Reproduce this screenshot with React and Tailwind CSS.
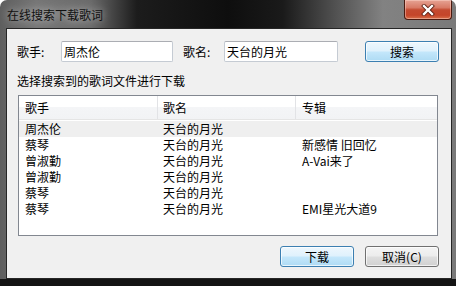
const rows = [
  ['周杰伦', '天台的月光', ''],
  ['蔡琴', '天台的月光', '新感情 旧回忆'],
  ['曾淑勤', '天台的月光', 'A-Vai来了'],
  ['曾淑勤', '天台的月光', ''],
  ['蔡琴', '天台的月光', ''],
  ['蔡琴', '天台的月光', 'EMI星光大道9'],
];

function WinButton({ children, primary }) {
  return (
    <button
      className={
        primary
          ? 'w-[74px] h-[21px] rounded-[3px] border border-[#3c7fb1] bg-[linear-gradient(180deg,#eef7fd_0%,#dff1fc_48%,#c4e7fb_52%,#aedbf4_100%)] shadow-[inset_0_0_0_1px_rgba(255,255,255,0.7)] text-black leading-none'
          : 'w-[74px] h-[21px] rounded-[3px] border border-[#707070] bg-[linear-gradient(180deg,#f4f4f4_0%,#ececec_48%,#dedede_52%,#d0d0d0_100%)] shadow-[inset_0_0_0_1px_rgba(255,255,255,0.7)] text-black leading-none'
      }
    >
      {children}
    </button>
  );
}

export default function App() {
  return (
    <div className="w-[456px] h-[286px] flex flex-col rounded-t-[7px] overflow-hidden bg-[linear-gradient(90deg,#5e5e5e_0%,#767676_8%,#6a6a6a_20%,#1c1c1c_30%,#0e0e0e_50%,#1a1a1a_62%,#4a4a4a_72%,#828282_84%,#7a7a7a_100%)] font-['Noto_Sans_CJK_SC','Noto_Sans',sans-serif] text-[12px] text-black">
      {/* Title bar */}
      <div className="h-[28px] flex items-start justify-between pl-[7px] pr-[4px] shrink-0">
        <span className="mt-[7px] leading-[16px] text-[#111] [text-shadow:0_0_8px_rgba(255,255,255,0.7)]">
          在线搜索下载歌词
        </span>
        <div className="w-[48px] h-[20px] rounded-b-[4px] border border-t-0 border-[#4a1a10] bg-[linear-gradient(180deg,#e6a394_0%,#d87a66_40%,#c44a30_52%,#c5452a_80%,#d8704a_100%)] shadow-[inset_0_0_0_1px_rgba(255,220,210,0.45)] flex items-center justify-center">
          <svg width="14" height="12" viewBox="0 0 14 12">
            <path d="M3 2 L11 10 M11 2 L3 10" stroke="#5a1c10" strokeWidth="4" strokeLinecap="square" />
            <path d="M3 2 L11 10 M11 2 L3 10" stroke="#ffffff" strokeWidth="2.4" strokeLinecap="square" />
          </svg>
        </div>
      </div>

      {/* Client */}
      <div className="flex-1 flex pl-[6px] pr-[4px] min-h-0">
        <div className="flex-1 border border-[#262626] bg-[#f0f0f0] flex flex-col pt-[12px] pl-[10px] pr-[12px]">
          <div className="flex items-center h-[21px]">
            <span className="w-[44px]">歌手:</span>
            <div className="w-[112px] h-[21px] border border-[#c5cbd3] border-t-[#abadb3] rounded-[2px] bg-white flex items-center pl-[2px]">
              周杰伦
            </div>
            <span className="ml-[10px] w-[41px]">歌名:</span>
            <div className="w-[114px] h-[21px] border border-[#c5cbd3] border-t-[#abadb3] rounded-[2px] bg-white flex items-center pl-[2px]">
              天台的月光
            </div>
            <div className="ml-auto">
              <WinButton primary>搜索</WinButton>
            </div>
          </div>

          <div className="mt-[11px] leading-[16px]">选择搜索到的歌词文件进行下载</div>

          <div className="mt-[6px] ml-[1px] w-[420px] h-[141px] border border-[#828790] bg-white flex flex-col">
            <div className="h-[24px] flex border-b border-[#e5e5e5] bg-[linear-gradient(180deg,#ffffff_0%,#ffffff_50%,#f4f5f7_50%,#f2f3f5_100%)]">
              <div className="w-[139px] border-r border-[#e2e3e6] pl-[6px] flex items-center">歌手</div>
              <div className="w-[138px] border-r border-[#e2e3e6] pl-[5px] flex items-center">歌名</div>
              <div className="flex-1 pl-[6px] flex items-center">专辑</div>
            </div>
            <div className="flex flex-col pt-[1px]">
              {rows.map((r, i) => (
                <div key={i} className={`h-[16px] flex items-center leading-[16px] ${i === 0 ? 'bg-[#efefef]' : ''}`}>
                  <div className="w-[139px] pl-[6px]">{r[0]}</div>
                  <div className="w-[138px] pl-[5px]">{r[1]}</div>
                  <div className="flex-1 pl-[6px] whitespace-pre">{r[2]}</div>
                </div>
              ))}
            </div>
          </div>

          <div className="mt-[10px] flex justify-end gap-[11px]">
            <WinButton primary>下载</WinButton>
            <WinButton>取消(C)</WinButton>
          </div>
        </div>
      </div>

      {/* Bottom frame */}
      <div className="h-[7px] shrink-0 bg-[#141414]" />
    </div>
  );
}
